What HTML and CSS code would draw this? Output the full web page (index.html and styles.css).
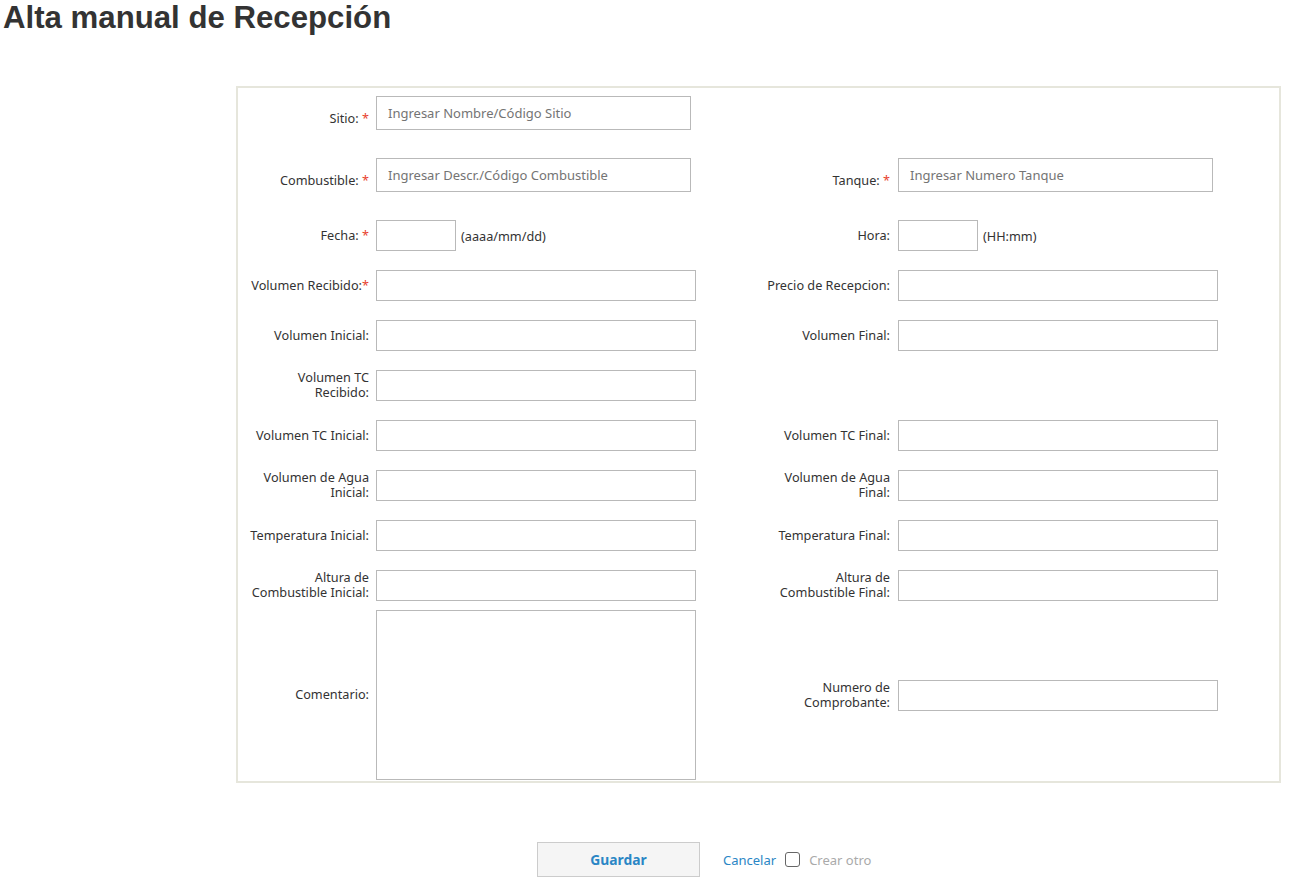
FILE: index.html
```html
<!DOCTYPE html>
<html lang="es">
<head>
<meta charset="utf-8">
<title>Alta manual de Recepción</title>
<link rel="stylesheet" href="styles.css">
</head>
<body>
<h1 class="page-title">Alta manual de Recepción</h1>

<form class="panel">
  <div class="row row-tall">
    <div class="half">
      <label class="lbl">Sitio: <span class="req">*</span></label>
      <input class="inp inp-tall" type="text" placeholder="Ingresar Nombre/Código Sitio">
    </div>
    <div class="half"></div>
  </div>

  <div class="row row-tall row-gap">
    <div class="half">
      <label class="lbl">Combustible: <span class="req">*</span></label>
      <input class="inp inp-tall" type="text" placeholder="Ingresar Descr./Código Combustible">
    </div>
    <div class="half">
      <label class="lbl">Tanque: <span class="req">*</span></label>
      <input class="inp inp-tall" type="text" placeholder="Ingresar Numero Tanque">
    </div>
  </div>

  <div class="row row-gap">
    <div class="half">
      <label class="lbl">Fecha: <span class="req">*</span></label>
      <div class="inline-field">
        <input class="inp inp-short" type="text">
        <span class="hint">(aaaa/mm/dd)</span>
      </div>
    </div>
    <div class="half">
      <label class="lbl">Hora:</label>
      <div class="inline-field">
        <input class="inp inp-short" type="text">
        <span class="hint">(HH:mm)</span>
      </div>
    </div>
  </div>

  <div class="row">
    <div class="half">
      <label class="lbl">Volumen Recibido:<span class="req">*</span></label>
      <input class="inp" type="text">
    </div>
    <div class="half">
      <label class="lbl">Precio de Recepcion:</label>
      <input class="inp" type="text">
    </div>
  </div>

  <div class="row">
    <div class="half">
      <label class="lbl">Volumen Inicial:</label>
      <input class="inp" type="text">
    </div>
    <div class="half">
      <label class="lbl">Volumen Final:</label>
      <input class="inp" type="text">
    </div>
  </div>

  <div class="row">
    <div class="half">
      <label class="lbl">Volumen TC<br>Recibido:</label>
      <input class="inp" type="text">
    </div>
    <div class="half"></div>
  </div>

  <div class="row">
    <div class="half">
      <label class="lbl">Volumen TC Inicial:</label>
      <input class="inp" type="text">
    </div>
    <div class="half">
      <label class="lbl">Volumen TC Final:</label>
      <input class="inp" type="text">
    </div>
  </div>

  <div class="row">
    <div class="half">
      <label class="lbl">Volumen de Agua<br>Inicial:</label>
      <input class="inp" type="text">
    </div>
    <div class="half">
      <label class="lbl">Volumen de Agua<br>Final:</label>
      <input class="inp" type="text">
    </div>
  </div>

  <div class="row">
    <div class="half">
      <label class="lbl">Temperatura Inicial:</label>
      <input class="inp" type="text">
    </div>
    <div class="half">
      <label class="lbl">Temperatura Final:</label>
      <input class="inp" type="text">
    </div>
  </div>

  <div class="row">
    <div class="half">
      <label class="lbl">Altura de<br>Combustible Inicial:</label>
      <input class="inp" type="text">
    </div>
    <div class="half">
      <label class="lbl">Altura de<br>Combustible Final:</label>
      <input class="inp" type="text">
    </div>
  </div>

  <div class="row row-last">
    <div class="half">
      <label class="lbl">Comentario:</label>
      <textarea class="inp inp-area"></textarea>
    </div>
    <div class="half">
      <label class="lbl">Numero de<br>Comprobante:</label>
      <input class="inp" type="text">
    </div>
  </div>
</form>

<div class="actions">
  <button class="btn-save" type="button">Guardar</button>
  <a class="link-cancel" href="#">Cancelar</a>
  <label class="check">
    <span class="check-box"></span>
    <span class="check-text">Crear otro</span>
  </label>
</div>
</body>
</html>
```

FILE: styles.css
```css
* {
  box-sizing: border-box;
}

html, body {
  margin: 0;
  padding: 0;
  background: #ffffff;
}

body {
  font-family: "Noto Sans", "Open Sans", sans-serif;
  font-size: 12.7px;
  color: #333333;
}

.page-title {
  margin: 0;
  padding: 0 0 0 3px;
  font-family: "Liberation Sans", Arial, sans-serif;
  font-size: 31.2px;
  font-weight: bold;
  line-height: 35px;
  color: #333333;
  height: 86px;
}

.panel {
  margin: 0 9px 0 236px;
  width: 1045px;
  border: 2px solid #e6e6dc;
  padding: 8px 0 1px 0;
  background: #ffffff;
}

.row {
  display: grid;
  grid-template-columns: 521px 520px;
  margin-top: 19px;
}

.row:first-child {
  margin-top: 0;
}

.row-gap {
  margin-top: 28px;
}

.row-last {
  margin-top: 9px;
}

.half {
  display: grid;
  grid-template-columns: 131px auto;
  column-gap: 7px;
  align-items: center;
}

.half + .half {
  grid-template-columns: 131px auto;
  column-gap: 8px;
}

.lbl {
  text-align: right;
  font-size: 12.7px;
  line-height: 15px;
  color: #333333;
  padding-left: 4px;
  padding-bottom: 1px;
}

.row-tall .lbl {
  align-self: end;
  padding-bottom: 4px;
}

.req {
  color: #e8412c;
}

.inp {
  display: block;
  width: 320px;
  height: 31px;
  border: 1px solid #b9b9b9;
  background: #ffffff;
  margin: 0;
  padding: 0 11px;
  font-family: "Noto Sans", "Open Sans", sans-serif;
  font-size: 13px;
  color: #333333;
  outline: none;
  border-radius: 0;
}

.inp::placeholder {
  color: #747474;
}

.inp-tall {
  width: 315px;
  height: 34px;
}

.inp-short {
  width: 80px;
}

.inp-area {
  height: 170px;
  resize: none;
  padding: 6px 8px;
}

.inline-field {
  display: flex;
  align-items: center;
  gap: 5px;
}

.hint {
  font-size: 12.7px;
  color: #333333;
}

.actions {
  display: flex;
  align-items: center;
  margin: 59px 0 0 537px;
}

.btn-save {
  width: 163px;
  height: 35px;
  border: 1px solid #cccccc;
  background: #f5f5f5;
  color: #2a86c5;
  font-family: "Noto Sans", "Open Sans", sans-serif;
  font-size: 13.8px;
  font-weight: bold;
  cursor: pointer;
}

.link-cancel {
  margin-left: 23px;
  color: #2a86c5;
  text-decoration: none;
  font-size: 13px;
}

.check {
  display: flex;
  align-items: center;
  margin-left: 9px;
}

.check-box {
  width: 15px;
  height: 15px;
  border: 1px solid #666666;
  border-radius: 3px;
  background: #ffffff;
}

.check-text {
  margin-left: 9px;
  color: #aaaaaa;
  font-size: 13px;
}
```
